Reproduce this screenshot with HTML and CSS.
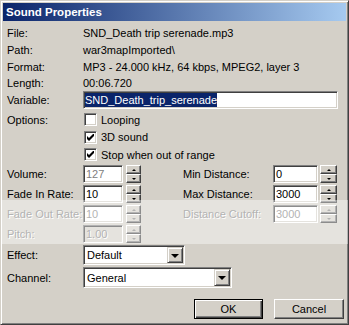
FILE: index.html
```html
<!DOCTYPE html>
<html lang="en">
<head>
    <meta charset="UTF-8">
    <title>Sound Properties</title>
    <link rel="stylesheet" href="styles.css">
</head>
<body>

<div class="dialog">
    <div class="titlebar">Sound Properties</div>

    <div class="content">
        <div class="row info"><span class="label">File:</span><span>SND_Death trip serenade.mp3</span></div>
        <div class="row info"><span class="label">Path:</span><span>war3mapImported\</span></div>
        <div class="row info"><span class="label">Format:</span><span>MP3 - 24.000 kHz, 64 kbps, MPEG2, layer 3</span></div>
        <div class="row info short"><span class="label">Length:</span><span>00:06.720</span></div>

        <div class="row field">
            <span class="label">Variable:</span>
            <div class="edit variable"><span class="selected">SND_Death_trip_serenade</span></div>
        </div>

        <div class="options">
            <div class="check-line">
                <span class="label">Options:</span>
                <span class="checkbox"></span>Looping
            </div>
            <div class="check-line">
                <span class="label"></span>
                <span class="checkbox"><svg width="7" height="7" viewBox="0 0 7 7"><path d="M0 2 L2 4 L7 -1 L7 2 L2 7 L0 5 Z" fill="#000"/></svg></span>3D sound
            </div>
            <div class="check-line">
                <span class="label"></span>
                <span class="checkbox"><svg width="7" height="7" viewBox="0 0 7 7"><path d="M0 2 L2 4 L7 -1 L7 2 L2 7 L0 5 Z" fill="#000"/></svg></span>Stop when out of range
            </div>
        </div>

        <div class="row spin-row first">
            <span class="label">Volume:</span>
            <div class="edit num grey">127</div>
            <div class="updown"><span class="up"></span><span class="down"></span></div>
            <span class="label right">Min Distance:</span>
            <div class="edit num wide">0</div>
            <div class="updown wide"><span class="up"></span><span class="down"></span></div>
        </div>
        <div class="row spin-row">
            <span class="label">Fade In Rate:</span>
            <div class="edit num">10</div>
            <div class="updown"><span class="up"></span><span class="down"></span></div>
            <span class="label right">Max Distance:</span>
            <div class="edit num wide">3000</div>
            <div class="updown wide"><span class="up"></span><span class="down"></span></div>
        </div>
        <div class="row spin-row disabled">
            <span class="label">Fade Out Rate:</span>
            <div class="edit num">10</div>
            <div class="updown"><span class="up"></span><span class="down"></span></div>
            <span class="label right">Distance Cutoff:</span>
            <div class="edit num wide">3000</div>
            <div class="updown wide"><span class="up"></span><span class="down"></span></div>
        </div>
        <div class="row spin-row disabled">
            <span class="label">Pitch:</span>
            <div class="edit num greybg">1.00</div>
            <div class="updown"><span class="up"></span><span class="down"></span></div>
        </div>

        <div class="row combo-row effect">
            <span class="label">Effect:</span>
            <div class="combo"><span class="combo-text">Default</span><span class="drop"></span></div>
        </div>
        <div class="row combo-row channel">
            <span class="label">Channel:</span>
            <div class="combo"><span class="combo-text">General</span><span class="drop"></span></div>
        </div>

        <div class="buttons">
            <button class="btn default">OK</button>
            <button class="btn">Cancel</button>
        </div>
    </div>

    <!-- light strip left by the image host over the screenshot -->
    <div class="wm-band"></div>
</div>

</body>
</html>
```

FILE: styles.css
```css
body {
    margin: 0;
    background-color: #d4d0c8;
}
.dialog {
    position: relative;
    width: 349px;
    height: 325px;
    box-sizing: border-box;
    padding: 2px;
    background-color: #d4d0c8;
    border: 1px solid;
    border-color: #d4d0c8 #404040 #404040 #d4d0c8;
    box-shadow: inset 1px 1px #fff, inset -1px -1px #808080;
    font-family: "Liberation Sans", Arial, sans-serif;
    font-size: 11px;
    color: #000;
    overflow: hidden;
}
.titlebar {
    height: 18px;
    line-height: 18px;
    padding-left: 3px;
    background: linear-gradient(to right, #0a246a, #a6caf0);
    color: #fff;
    font-weight: bold;
    font-size: 11.5px;
}
.content {
    padding: 4px 0 0 4px;
}
.row {
    display: flex;
    align-items: center;
}
.label {
    width: 76px;
    flex-shrink: 0;
}
.info {
    height: 17px;
    line-height: 17px;
}
.info.short {
    height: 15px;
    line-height: 15px;
}

/* sunken edit boxes */
.edit {
    box-sizing: border-box;
    height: 18px;
    line-height: 16px;
    padding: 0 1px 0 2px;
    background-color: #fff;
    border: 1px solid;
    border-color: #808080 #fff #fff #808080;
    box-shadow: inset 1px 1px #404040, inset -1px -1px #d4d0c8;
    white-space: nowrap;
    overflow: hidden;
}
.field {
    height: 18px;
}
.variable {
    width: 255px;
    padding-left: 1px;
}
.selected {
    display: inline-block;
    line-height: 14px;
    margin-top: 1px;
    vertical-align: top;
    background-color: #0a246a;
    color: #fff;
}

/* check boxes */
.options {
    margin-top: 2px;
}
.check-line {
    display: flex;
    align-items: center;
    height: 17.5px;
}
.checkbox {
    box-sizing: border-box;
    width: 13px;
    height: 13px;
    margin: 0 4px 0 1px;
    background-color: #fff;
    border: 1px solid;
    border-color: #808080 #fff #fff #808080;
    box-shadow: inset 1px 1px #404040, inset -1px -1px #d4d0c8;
    display: flex;
    align-items: center;
    justify-content: center;
}

/* spinner rows */
.spin-row {
    height: 18px;
    margin-top: 2px;
}
.spin-row.first {
    margin-top: 1.5px;
}
.num {
    width: 40px;
}
.num.wide {
    width: 45px;
}
.grey {
    color: #808080;
}
.greybg {
    background-color: #d4d0c8;
}
.label.right {
    width: 90px;
    margin-left: 42px;
}
.updown {
    width: 15px;
    height: 18px;
    margin-left: 3px;
    display: flex;
    flex-direction: column;
}
.updown.wide {
    width: 17px;
    margin-left: 2px;
}
.updown span {
    flex: 1;
    box-sizing: border-box;
    background-color: #d4d0c8;
    border: 1px solid;
    border-color: #fff #404040 #404040 #fff;
    box-shadow: inset -1px -1px #808080;
    display: flex;
    align-items: center;
    justify-content: center;
}
.updown .up::after,
.updown .down::after {
    content: "";
    width: 0;
    height: 0;
    border-left: 2px solid transparent;
    border-right: 2px solid transparent;
}
.updown .up::after {
    border-bottom: 2px solid #000;
}
.updown .down::after {
    border-top: 2px solid #000;
}
.disabled .label,
.disabled .edit {
    color: #808080;
    text-shadow: 1px 1px #fff;
}
.disabled .updown .up::after {
    border-bottom-color: #808080;
}
.disabled .updown .down::after {
    border-top-color: #808080;
}

/* combo boxes */
.combo-row {
    margin-top: 2px;
}
.effect {
    height: 20px;
}
.channel {
    height: 21px;
}
.combo {
    box-sizing: border-box;
    height: 100%;
    display: flex;
    align-items: stretch;
    background-color: #fff;
    border: 1px solid;
    border-color: #808080 #fff #fff #808080;
    box-shadow: inset 1px 1px #404040, inset -1px -1px #d4d0c8;
    padding: 1px;
}
.effect .combo {
    width: 102px;
}
.channel .combo {
    width: 149px;
}
.combo-text {
    flex: 1;
    padding-left: 2px;
    display: flex;
    align-items: center;
}
.drop {
    width: 16px;
    box-sizing: border-box;
    background-color: #d4d0c8;
    border: 1px solid;
    border-color: #d4d0c8 #404040 #404040 #d4d0c8;
    box-shadow: inset 1px 1px #fff, inset -1px -1px #808080;
    display: flex;
    align-items: center;
    justify-content: center;
}
.drop::after {
    content: "";
    width: 0;
    height: 0;
    border-left: 4px solid transparent;
    border-right: 4px solid transparent;
    border-top: 4px solid #000;
    margin-top: 1px;
}

/* push buttons */
.buttons {
    display: flex;
    justify-content: flex-end;
    gap: 11px;
    margin-top: 11px;
    padding-right: 2px;
}
.btn {
    box-sizing: border-box;
    width: 70px;
    height: 20px;
    padding: 0;
    background-color: #d4d0c8;
    border: 1px solid;
    border-color: #fff #404040 #404040 #fff;
    box-shadow: inset -1px -1px #808080, inset 1px 1px #d4d0c8;
    font-family: "Liberation Sans", Arial, sans-serif;
    font-size: 11px;
    color: #000;
}
.btn.default {
    width: 69px;
    border: 1px solid #000;
    box-shadow: inset 1px 1px #fff, inset -1px -1px #404040, inset -2px -2px #808080;
}

/* watermark strip */
.wm-band {
    position: absolute;
    left: 0;
    right: 0;
    top: 199px;
    height: 44px;
    background-color: rgba(255, 255, 255, 0.4);
}
```
